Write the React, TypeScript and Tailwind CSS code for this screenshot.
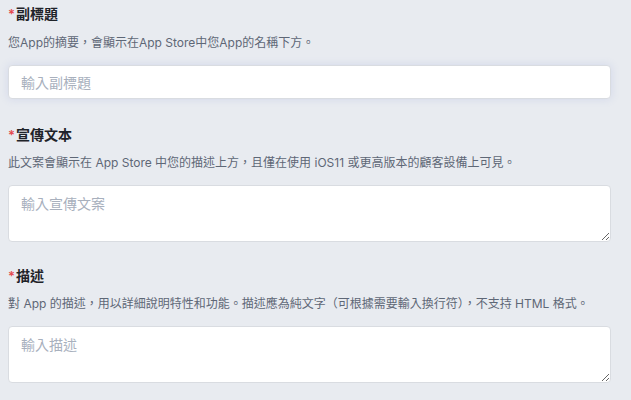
export default function App() {
  return (
    <div
      className="min-h-[400px] w-full bg-[#e8ebf0] pl-2 pr-5 pt-1 text-[#1f2329]"
      style={{ fontFamily: 'Inter, "Noto Sans CJK TC", sans-serif' }}
    >
      <div className="flex flex-col">
        <label className="flex items-center text-sm font-semibold leading-5">
          <span className="text-[#e5484d] text-[13px] mr-px">*</span>副標題
        </label>
        <p className="mt-[9px] text-xs leading-5 text-[#5e6776]">
          您App的摘要，會顯示在App Store中您App的名稱下方。
        </p>
        <input
          className="mt-[12px] h-[34px] w-full rounded border border-[#d9dce1] bg-white px-3 text-sm shadow-[0_0_8px_rgba(110,130,210,0.18)] outline-none placeholder:text-[#a8b0bd]"
          placeholder="輸入副標題"
        />

        <label className="mt-[26px] flex items-center text-sm font-semibold leading-5">
          <span className="text-[#e5484d] text-[13px] mr-px">*</span>宣傳文本
        </label>
        <p className="mt-[8px] text-xs leading-5 text-[#5e6776]">
          此文案會顯示在 App Store 中您的描述上方，且僅在使用 iOS11 或更高版本的顧客設備上可見。
        </p>
        <textarea
          className="mt-[12px] block h-[57px] w-full rounded border border-[#d9dce1] bg-white px-3 py-[8px] text-sm outline-none placeholder:text-[#a8b0bd]"
          placeholder="輸入宣傳文案"
        />

        <label className="mt-[24px] flex items-center text-sm font-semibold leading-5">
          <span className="text-[#e5484d] text-[13px] mr-px">*</span>描述
        </label>
        <p className="mt-[8px] text-xs leading-5 text-[#5e6776]">
          對 App 的描述，用以詳細說明特性和功能。描述應為純文字（可根據需要輸入換行符），不支持 HTML 格式。
        </p>
        <textarea
          className="mt-[12px] block h-[57px] w-full rounded border border-[#d9dce1] bg-white px-3 py-[8px] text-sm outline-none placeholder:text-[#a8b0bd]"
          placeholder="輸入描述"
        />
      </div>
    </div>
  )
}
